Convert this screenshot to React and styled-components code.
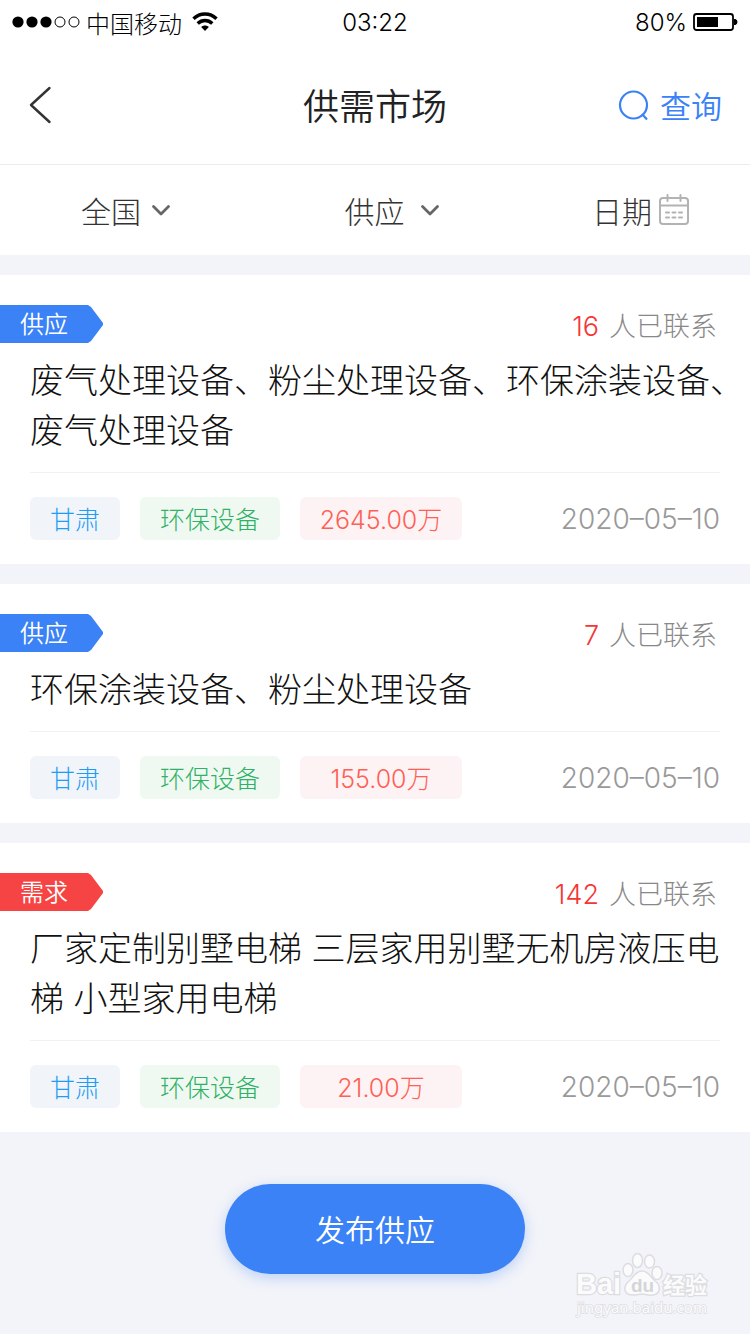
import React from 'react';
import styled, { createGlobalStyle } from 'styled-components';

const posts = [
  {
    id: 1,
    type: '供应',
    contacts: 16,
    title: '废气处理设备、粉尘处理设备、环保涂装设备、废气处理设备',
    area: '甘肃',
    category: '环保设备',
    price: '2645.00万',
    date: '2020–05–10',
  },
  {
    id: 2,
    type: '供应',
    contacts: 7,
    title: '环保涂装设备、粉尘处理设备',
    area: '甘肃',
    category: '环保设备',
    price: '155.00万',
    date: '2020–05–10',
  },
  {
    id: 3,
    type: '需求',
    contacts: 142,
    title: '厂家定制别墅电梯 三层家用别墅无机房液压电梯 小型家用电梯',
    area: '甘肃',
    category: '环保设备',
    price: '21.00万',
    date: '2020–05–10',
  },
];

const StatusBar = () => (
  <StatusWrap>
    <StatusSide>
      <svg width="68" height="14" viewBox="0 0 68 14">
        <circle cx="6" cy="7" r="5.6" />
        <circle cx="20" cy="7" r="5.6" />
        <circle cx="34" cy="7" r="5.6" />
        <circle cx="48" cy="7" r="5" fill="none" stroke="#000" />
        <circle cx="62" cy="7" r="5" fill="none" stroke="#000" />
      </svg>
      <Carrier>中国移动</Carrier>
      <svg width="26" height="20" viewBox="0 0 26 20" fill="none" stroke="#000">
        <path d="M1.5 6.8C8 .4 18 .4 24.5 6.8" strokeWidth="3.4" />
        <path d="M5.7 11.5c4.2-4 10.4-4 14.6 0" strokeWidth="3.4" />
        <path d="M13 19l-3.8-4c2.2-2 5.4-2 7.6 0z" fill="#000" stroke="none" />
      </svg>
    </StatusSide>
    <Figure>03:22</Figure>
    <StatusSide $end>
      <Figure>80%</Figure>
      <svg width="45" height="20" viewBox="0 0 45 20">
        <rect x="1" y="2" width="39" height="16" rx="2.5" fill="none" stroke="#000" strokeWidth="1.8" />
        <rect x="4" y="5" width="21" height="10" />
        <path d="M41 7h1.5q2 1 2 3t-2 3H41z" />
      </svg>
    </StatusSide>
  </StatusWrap>
);

const Chevron = () => (
  <svg width="20" height="14" viewBox="0 0 20 14" fill="none" stroke="#666" strokeWidth="2.8" strokeLinecap="round" strokeLinejoin="round">
    <path d="M2.5 3.5L10 11l7.5-7.5" />
  </svg>
);

const CalendarIcon = () => (
  <svg width="32" height="32" viewBox="0 0 32 32" fill="none" stroke="#b3b3b3" strokeWidth="2" strokeLinecap="round">
    <rect x="2" y="4" width="28" height="26" rx="3" />
    <path d="M2 11.5h28M9.5 1v6M22.5 1v6" />
    <path d="M8 18.5h3M14.5 18.5h3M21 18.5h3M8 23.5h3M14.5 23.5h3M21 23.5h3" />
  </svg>
);

const PostCard = ({ post }) => (
  <Card>
    <CardTop>
      <Ribbon $demand={post.type === '需求'}>{post.type}</Ribbon>
      <Contacts>
        <strong>{post.contacts}</strong>
        <span>人已联系</span>
      </Contacts>
    </CardTop>
    <Title>{post.title}</Title>
    <CardBottom>
      <Tag $width={90} $color="#1f9cf5" $bg="#f1f5fa">{post.area}</Tag>
      <Tag $width={140} $color="#2fb265" $bg="#eff9f2">{post.category}</Tag>
      <Tag $width={162} $color="#ff6055" $bg="#fef3f4">{post.price}</Tag>
      <PostDate>{post.date}</PostDate>
    </CardBottom>
  </Card>
);

const Watermark = () => (
  <WatermarkWrap>
    <svg width="140" height="68" viewBox="0 0 140 68" fill="#fbfbfc" stroke="#dcdde1" strokeWidth="1.5">
      <g paintOrder="stroke" strokeWidth="2.5" fontWeight="bold">
        <text x="4" y="42" fontSize="29" fontFamily="Liberation Sans, sans-serif">Bai</text>
        <text x="91" y="41" fontSize="22" fontFamily="Noto Sans CJK SC, sans-serif">经验</text>
        <text x="5" y="61" fontSize="15" strokeWidth="1.5" fontWeight="normal" fontFamily="Noto Sans, sans-serif">jingyan.baidu.com</text>
      </g>
      <path d="M70 19c-7 0-9 7-13 10-6 5-6 14 4 14 4 0 6-1 9-1s6 2 11 1c8-1 8-10 2-14-4-3-6-10-13-10z" />
      <ellipse cx="56" cy="18" rx="5" ry="6.5" />
      <ellipse cx="65.5" cy="8.5" rx="5" ry="7" />
      <ellipse cx="77.5" cy="9.5" rx="5" ry="6.5" />
      <ellipse cx="85" cy="21" rx="5" ry="6.5" />
      <text x="59" y="40" fontSize="19" fontWeight="bold" fill="#d4d5d9" stroke="none" fontFamily="Liberation Sans, sans-serif">du</text>
    </svg>
  </WatermarkWrap>
);

const App = () => {
  return (
    <Page>
      <GlobalStyle />
      <StatusBar />
      <Header>
        <BackButton type="button" aria-label="返回">
          <svg width="24" height="40" viewBox="0 0 24 40" fill="none" stroke="#333" strokeWidth="2.4" strokeLinecap="round" strokeLinejoin="round">
            <path d="M21.5 4L3 21l18.5 17" />
          </svg>
        </BackButton>
        <h1>供需市场</h1>
        <SearchButton type="button">
          <svg width="32" height="34" viewBox="0 0 32 34" fill="none" stroke="#3a82f6" strokeWidth="2.2">
            <circle cx="15.5" cy="18" r="13.5" />
            <path d="M24 27l5 5.5" />
          </svg>
          查询
        </SearchButton>
      </Header>
      <Filters>
        <FilterButton type="button">
          全国
          <Chevron />
        </FilterButton>
        <FilterButton type="button" $gap={15}>
          供应
          <Chevron />
        </FilterButton>
        <FilterButton type="button" $gap={6}>
          日期
          <CalendarIcon />
        </FilterButton>
      </Filters>
      <List>
        {posts.map((post) => (
          <PostCard key={post.id} post={post} />
        ))}
      </List>
      <Footer>
        <PublishButton type="button">发布供应</PublishButton>
      </Footer>
      <Watermark />
    </Page>
  );
};

const GlobalStyle = createGlobalStyle`
  * {
    box-sizing: border-box;
  }
  body {
    margin: 0;
    background: #f3f4f9;
  }
  body, button {
    font-family: Inter, 'Noto Sans CJK SC', sans-serif;
    font-weight: 300;
  }
  button {
    padding: 0;
    border: 0;
    background: none;
    cursor: pointer;
  }
  svg {
    display: block;
    flex-shrink: 0;
  }
`;

const Page = styled.div`
  position: relative;
  min-height: 100vh;
  color: #111;
`;

const StatusWrap = styled.div`
  display: grid;
  grid-template-columns: 1fr auto 1fr;
  align-items: center;
  height: 44px;
  padding: 0 12px;
  background: #fff;
  color: #000;
  font-size: 24px;
`;

const StatusSide = styled.div`
  display: flex;
  align-items: center;
  justify-content: ${(props) => (props.$end ? 'flex-end' : 'flex-start')};
  gap: 6px;
`;

const Carrier = styled.span`
  margin-right: 4px;
`;

const Figure = styled.span`
  font-weight: 350;
`;

const Header = styled.header`
  display: grid;
  grid-template-columns: 1fr auto 1fr;
  align-items: center;
  height: 121px;
  padding: 0 28px;
  border-bottom: 1px solid #ececec;
  background: #fff;

  h1 {
    margin: 0;
    font-size: 36px;
    font-weight: 350;
    color: #222;
  }
`;

const BackButton = styled.button`
  justify-self: start;
`;

const SearchButton = styled.button`
  display: flex;
  align-items: center;
  justify-self: end;
  gap: 10px;
  color: #3a82f6;
  font-size: 31px;
  font-weight: 350;
`;

const Filters = styled.nav`
  display: grid;
  grid-template-columns: 252fr 280fr 218fr;
  height: 90px;
  background: #fff;
`;

const FilterButton = styled.button`
  display: flex;
  align-items: center;
  justify-content: center;
  gap: ${(props) => props.$gap || 10}px;
  color: #333;
  font-size: 30px;
`;

const List = styled.main`
  display: flex;
  flex-direction: column;
  gap: 20px;
  padding-top: 20px;
`;

const Card = styled.article`
  padding: 30px 0 24px;
  background: #fff;
`;

const CardTop = styled.div`
  display: flex;
  align-items: center;
  justify-content: space-between;
  height: 38px;
  padding-right: 33px;
`;

const Ribbon = styled.span`
  width: 104px;
  height: 38px;
  padding-left: 20px;
  background: ${(props) => (props.$demand ? '#f64444' : '#3a82f6')};
  clip-path: polygon(0 0, 88px 0, 91px 2px, 103px 18px, 103px 20px, 91px 36px, 88px 38px, 0 38px);
  color: #fff;
  font-size: 24px;
  font-weight: 350;
  line-height: 40px;
`;

const Contacts = styled.span`
  display: flex;
  align-items: baseline;
  gap: 10px;
  color: #888;
  font-size: 27px;

  strong {
    color: #f53636;
    font-weight: 350;
  }
`;

const Title = styled.h2`
  margin: 13px 0 16px;
  padding-left: 30px;
  font-size: 34px;
  font-weight: 300;
  line-height: 50px;
`;

const CardBottom = styled.div`
  display: flex;
  align-items: center;
  gap: 20px;
  margin: 0 30px;
  padding-top: 24px;
  border-top: 1px solid #f2f2f2;
`;

const Tag = styled.span`
  width: ${(props) => props.$width}px;
  padding-top: 3px;
  border-radius: 6px;
  background: ${(props) => props.$bg};
  color: ${(props) => props.$color};
  font-size: 25px;
  line-height: 40px;
  text-align: center;
`;

const PostDate = styled.time`
  margin-left: auto;
  color: #999;
  font-size: 28px;
`;

const Footer = styled.footer`
  display: flex;
  justify-content: center;
  padding: 52px 0 60px;
`;

const PublishButton = styled.button`
  width: 300px;
  height: 90px;
  padding-bottom: 2px;
  border-radius: 45px;
  background: #3a82f6;
  box-shadow: 0 4px 14px rgba(58, 130, 246, 0.3);
  color: #fff;
  font-size: 30px;
  font-weight: 350;
`;

const WatermarkWrap = styled.div`
  position: absolute;
  right: 38px;
  bottom: 14px;
  pointer-events: none;
`;

export default App;
